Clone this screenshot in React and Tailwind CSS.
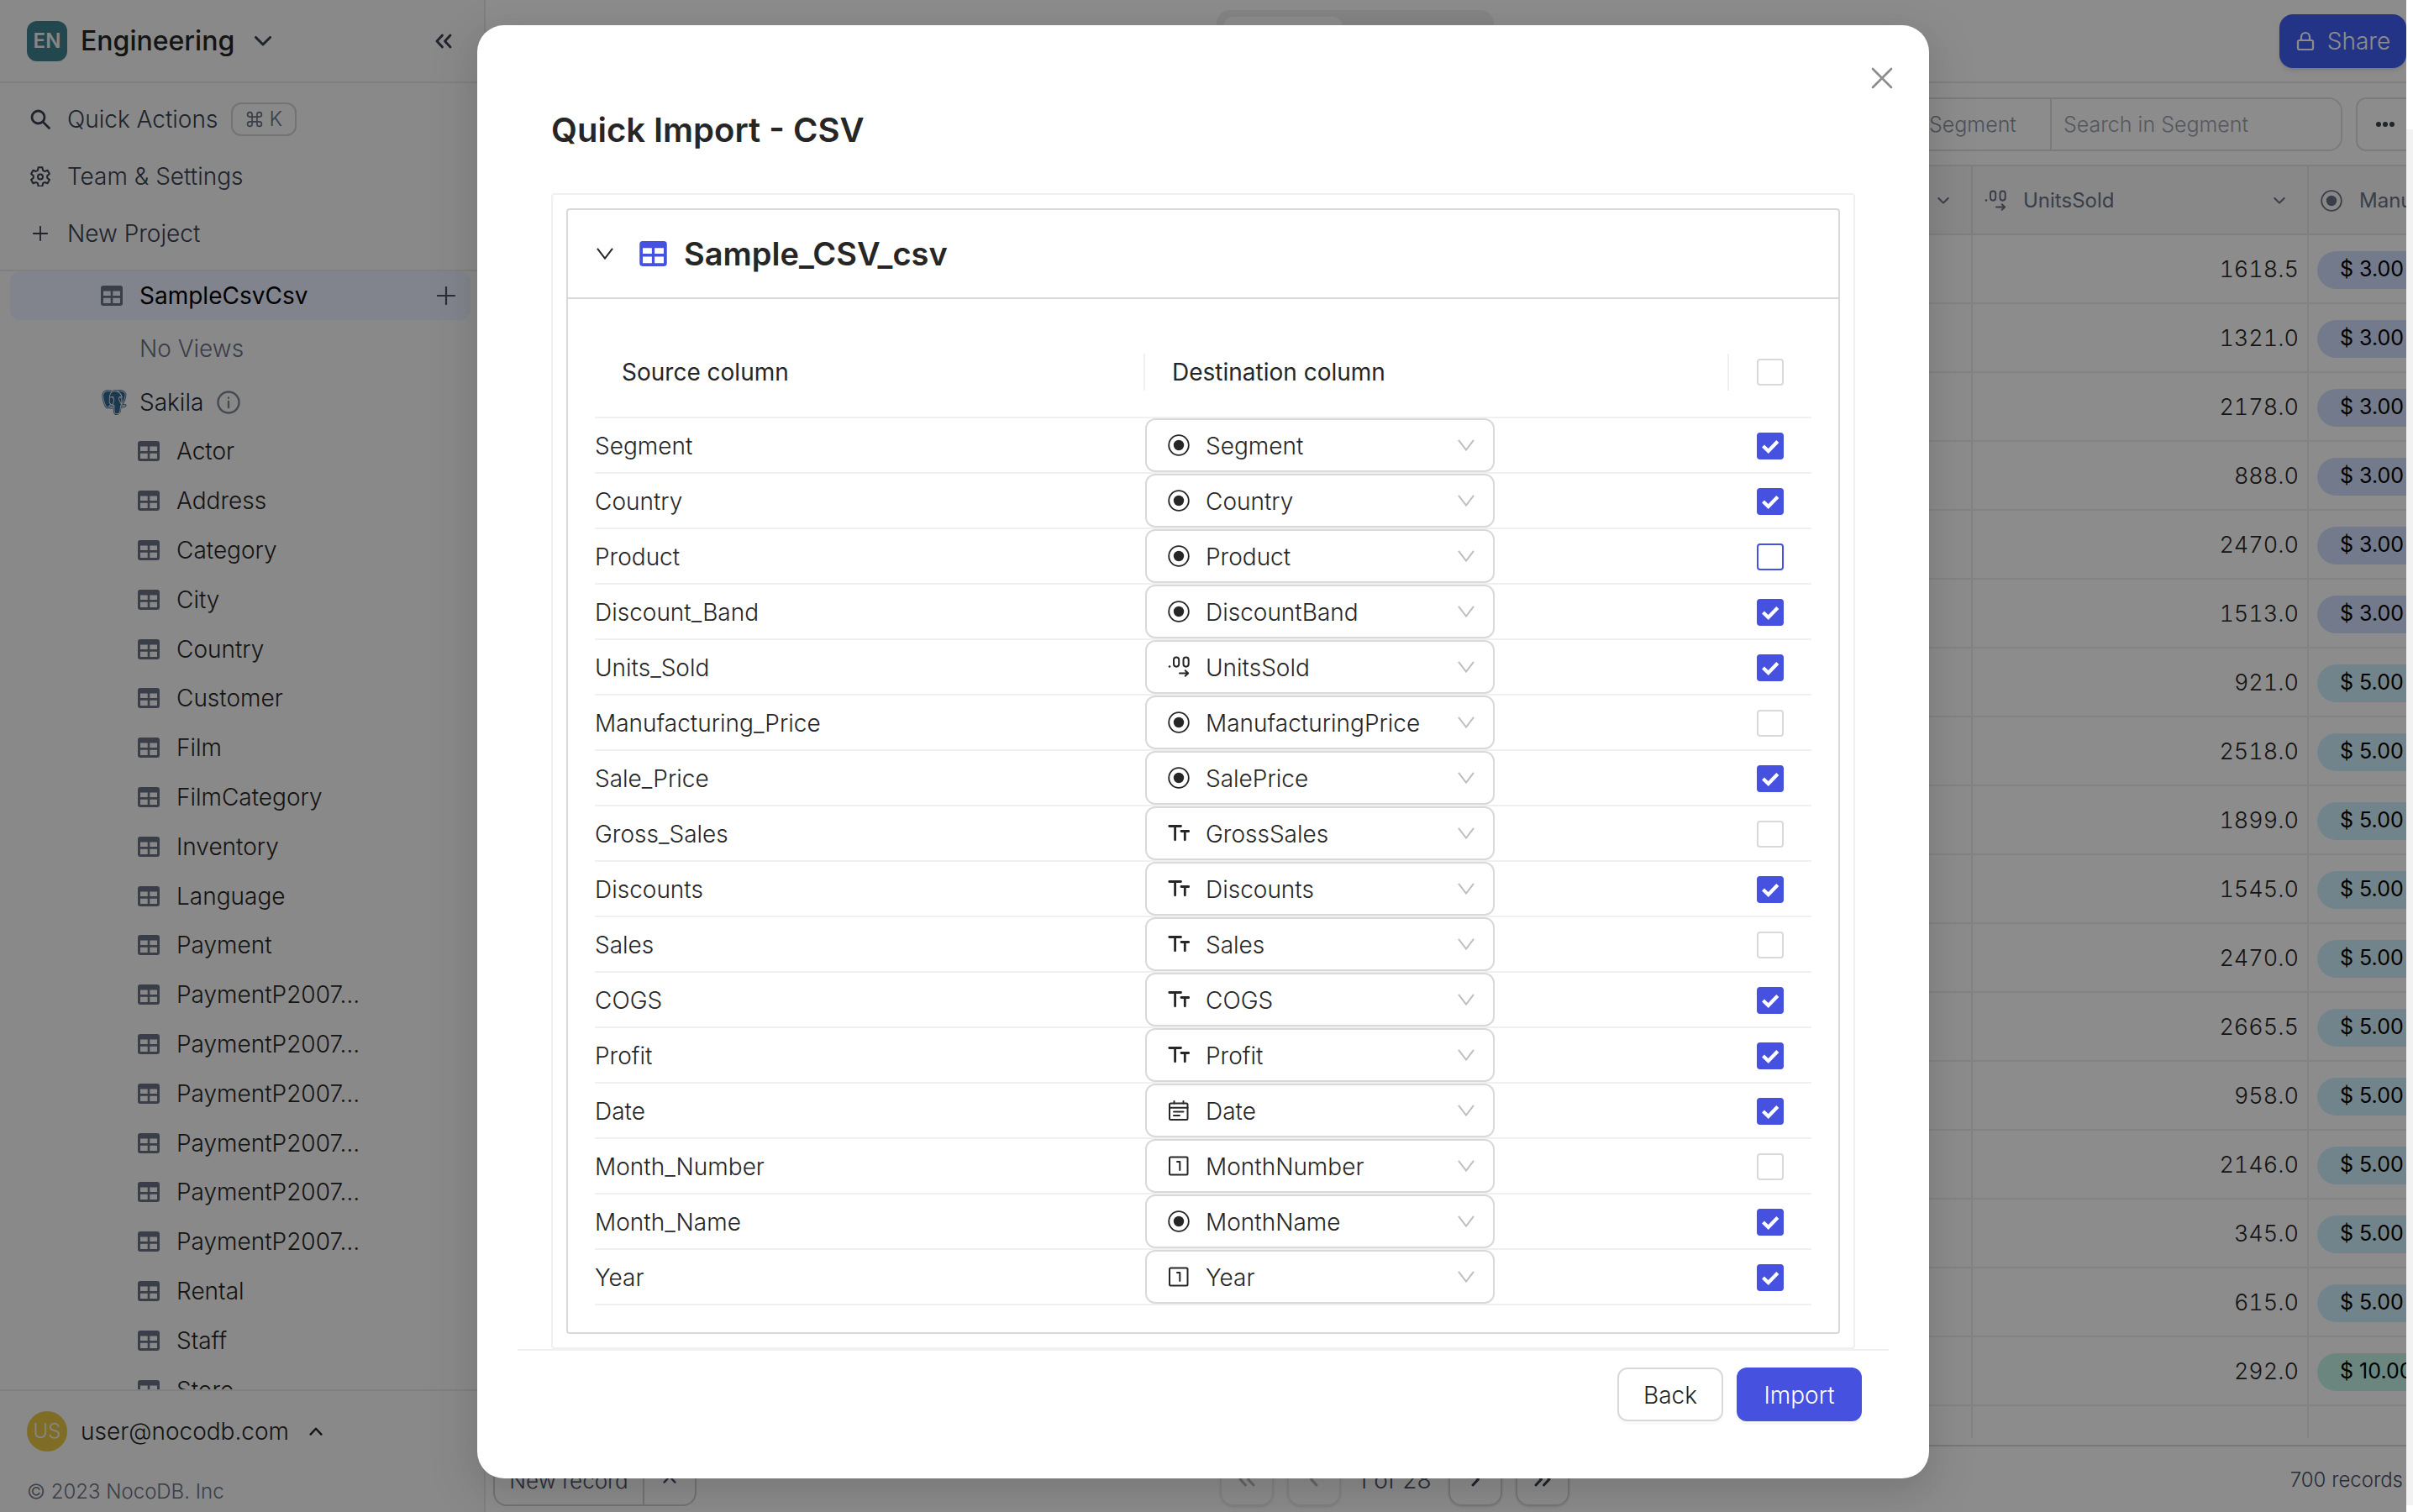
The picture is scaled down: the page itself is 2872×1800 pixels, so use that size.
import React from "react";
import { BiLogoPostgresql } from "react-icons/bi";
import { Lock } from "lucide-react";

const FIELDS = [
  ["Segment", "Segment", "select", "on"],
  ["Country", "Country", "select", "on"],
  ["Product", "Product", "select", "active"],
  ["Discount_Band", "DiscountBand", "select", "on"],
  ["Units_Sold", "UnitsSold", "decimal", "on"],
  ["Manufacturing_Price", "ManufacturingPrice", "select", "off"],
  ["Sale_Price", "SalePrice", "select", "on"],
  ["Gross_Sales", "GrossSales", "text", "off"],
  ["Discounts", "Discounts", "text", "on"],
  ["Sales", "Sales", "text", "off"],
  ["COGS", "COGS", "text", "on"],
  ["Profit", "Profit", "text", "on"],
  ["Date", "Date", "date", "on"],
  ["Month_Number", "MonthNumber", "number", "off"],
  ["Month_Name", "MonthName", "select", "on"],
  ["Year", "Year", "number", "on"],
];

const TABLES = [
  "Actor", "Address", "Category", "City", "Country", "Customer", "Film", "FilmCategory",
  "Inventory", "Language", "Payment", "PaymentP2007…", "PaymentP2007…", "PaymentP2007…",
  "PaymentP2007…", "PaymentP2007…", "PaymentP2007…", "Rental", "Staff", "Store",
];

const BLUE = "bg-[#cfdffe]";
const CYAN = "bg-[#d0f1fd]";
const GREEN = "bg-[#c2f5e8]";

const RECORDS = [
  ["1618.5", "$ 3.00", BLUE], ["1321.0", "$ 3.00", BLUE], ["2178.0", "$ 3.00", BLUE],
  ["888.0", "$ 3.00", BLUE], ["2470.0", "$ 3.00", BLUE], ["1513.0", "$ 3.00", BLUE],
  ["921.0", "$ 5.00", CYAN], ["2518.0", "$ 5.00", CYAN], ["1899.0", "$ 5.00", CYAN],
  ["1545.0", "$ 5.00", CYAN], ["2470.0", "$ 5.00", CYAN], ["2665.5", "$ 5.00", CYAN],
  ["958.0", "$ 5.00", CYAN], ["2146.0", "$ 5.00", CYAN], ["345.0", "$ 5.00", CYAN],
  ["615.0", "$ 5.00", CYAN], ["292.0", "$ 10.00", GREEN],
];

function Stroke({ box = "0 0 24 24", width = 2, className, cap = "round", children }) {
  return (
    <svg viewBox={box} fill="none" stroke="currentColor" strokeWidth={width} strokeLinecap={cap} strokeLinejoin={cap === "round" ? "round" : "miter"} className={className} aria-hidden="true">
      {children}
    </svg>
  );
}

const Chevron = ({ className, d = "M1.5 1.5 10 10l8.5-8.5", width = 3 }) => (
  <Stroke box="0 0 20 12" width={width} className={className}><path d={d} /></Stroke>
);

const ThinChevron = ({ className }) => (
  <Stroke box="0 0 20 14" width={2} cap="butt" className={className}><path d="M1 .8 10 12.6 19 .8" /></Stroke>
);

const TableIcon = ({ className }) => (
  <svg viewBox="0 0 26 24" fill="currentColor" fillRule="evenodd" className={className} aria-hidden="true">
    <path d="M3 0h20a3 3 0 0 1 3 3v18a3 3 0 0 1-3 3H3a3 3 0 0 1-3-3V3a3 3 0 0 1 3-3ZM3 6.500h8.700v5.500H3ZM14.300 6.500H23v5.500h-8.700ZM3 14.800h8.700V21H3ZM14.300 14.800H23V21h-8.700Z" />
  </svg>
);

function TypeIcon({ type, className }) {
  if (type === "decimal")
    return (
      <Stroke box="0 0 26 26" width={2} className={className}>
        <circle cx="2" cy="12.500" r="1.300" fill="currentColor" stroke="none" />
        <rect x="7" y="1.500" width="6.200" height="11.200" rx="3.100" />
        <rect x="18.500" y="1.500" width="6.200" height="11.200" rx="3.100" />
        <path d="M14 20.500h10M20.700 17.200l3.500 3.300-3.500 3.300" />
      </Stroke>
    );
  if (type === "text")
    return (
      <Stroke box="0 0 26 26" width={2.8} className={className}>
        <path d="M1.800 4.500H15.500M8.600 4.500V20.800M16 10.500H24.700M20.300 10.500V20.800" />
      </Stroke>
    );
  if (type === "date")
    return (
      <Stroke box="0 0 26 26" width={2} className={className}>
        <rect x="2" y="4.500" width="21.500" height="19.500" rx="1.500" />
        <path d="M2 9.800h21.500M7.500 2v2.500M18.500 2v2.500M7 14.500h11.500M7 19h7" />
      </Stroke>
    );
  if (type === "number")
    return (
      <Stroke box="0 0 26 26" width={2} className={className}>
        <rect x="2" y="2.500" width="21.500" height="21" rx="1.500" />
        <path d="M11 8h3.300V18" />
      </Stroke>
    );
  return (
    <Stroke box="0 0 26 26" width={1.8} className={className}>
      <circle cx="13" cy="13" r="11.800" />
      <circle cx="13" cy="13" r="6.200" fill="currentColor" stroke="none" />
    </Stroke>
  );
}

const PlusIcon = ({ className }) => (
  <Stroke width={2.4} className={className}><path d="M12 1v22M1 12h22" /></Stroke>
);

function Check({ state, label }) {
  return (
    <span className="mx-auto grid size-8 *:col-start-1 *:row-start-1">
      <input
        type="checkbox"
        aria-label={label}
        defaultChecked={state === "on"}
        className={
          "peer size-8 appearance-none rounded-sm border-2 bg-white checked:border-[#4651df] checked:bg-[#4651df] " +
          (state === "active" ? "border-[#4651df]" : "border-[#d9d9d9]")
        }
      />
      <svg viewBox="0 0 32 32" fill="none" stroke="#fff" strokeWidth="4.200" className="pointer-events-none hidden size-8 peer-checked:block" aria-hidden="true">
        <path d="M7.500 16 13.700 22 24.800 10.500" />
      </svg>
    </span>
  );
}

function Sidebar() {
  return (
    <aside className="flex w-[578px] shrink-0 flex-col border-r-2 border-[#e7e7e9] bg-[#f9f9fa]">
      <header className="flex h-[99px] shrink-0 items-center border-b-2 border-[#e7e7e9] pr-[38px] pl-8">
        <button className="flex items-center gap-4">
          <span className="flex size-12 items-center justify-center rounded-xl bg-[#3f828f] text-[24px] font-semibold text-[#f5f5f5]">EN</span>
          <span className="text-[32px] font-medium text-[#262626]">Engineering</span>
          <Chevron className="ml-2 h-3 w-5 text-[#374151]" />
        </button>
        <button aria-label="Collapse sidebar" className="ml-auto">
          <Stroke box="0 0 20 18" width={2.8} className="h-[18px] w-5 text-[#374151]">
            <path d="M8.500 2 2 9l6.500 7M18 2l-6.500 7 6.500 7" />
          </Stroke>
        </button>
      </header>
      <nav className="flex shrink-0 flex-col border-b-2 border-[#e7e7e9] px-9 py-[9px] text-[28px] font-light text-[#374151]">
        <button className="flex h-[68px] items-center">
          <Stroke box="0 0 24 24" width={2.8} className="size-6"><circle cx="9.500" cy="9.500" r="7.500" /><path d="m15.500 15.500 7 7" /></Stroke>
          <span className="ml-5">Quick Actions</span>
          <kbd className="ml-4 flex h-10 w-[78px] items-center justify-center rounded-xl border-2 border-[#d1d1d6] font-[Inter] text-[24px] text-[#6a7184]">
            <Stroke width={2} className="mr-2 size-5">
              <path d="M8.500 8.500h7v7h-7zM8.500 8.500V5.200a3.300 3.300 0 1 0-3.300 3.300zM15.500 8.500h3.300a3.300 3.300 0 1 0-3.300-3.300zM15.500 15.500v3.300a3.300 3.300 0 1 0 3.300-3.300zM8.500 15.500H5.200a3.300 3.300 0 1 0 3.300 3.300z" />
            </Stroke>
            K
          </kbd>
        </button>
        <button className="flex h-[68px] items-center">
          <Stroke width={2} className="size-6">
            <path d="M9.600 1.200h4.800l.7 3.600 2 1.200 3.500-1.200 2.300 4.100-2.700 2.400v2.400l2.700 2.400-2.300 4.100-3.500-1.200-2 1.200-.7 3.600H9.600l-.7-3.600-2-1.200-3.500 1.200-2.300-4.100 2.700-2.400v-2.400L1.100 8.900l2.300-4.100L6.900 6l2-1.200z" />
            <circle cx="12" cy="12.500" r="3" />
          </Stroke>
          <span className="ml-5">Team &amp; Settings</span>
        </button>
        <button className="flex h-[68px] items-center">
          <span className="flex w-6 justify-center"><PlusIcon className="size-[18px]" /></span>
          <span className="ml-5">New Project</span>
        </button>
      </nav>
      <div className="flex min-h-0 flex-1 flex-col overflow-hidden text-[28px]">
        <div className="mr-4 ml-3 flex h-[58px] shrink-0 items-center rounded-xl bg-[#ebf0ff] pr-[18px] pl-[108px]">
          <TableIcon className="h-6 w-[26px] text-[#6a7184]" />
          <a href="#SampleCsvCsv" className="ml-5 text-black">SampleCsvCsv</a>
          <button aria-label="Add view" className="ml-auto text-[#4a5268]"><PlusIcon className="size-[22px]" /></button>
        </div>
        <p className="flex h-[68px] shrink-0 items-center pl-[166px] font-light text-[#6a7184]">No Views</p>
        <div className="flex h-[59px] shrink-0 items-center pl-[118px] font-light text-[#1f293a]">
          <BiLogoPostgresql className="size-9 text-[#336791]" />
          <span className="ml-3">Sakila</span>
          <Stroke box="0 0 28 28" width={2.4} className="ml-4 size-7 text-[#808797]">
            <circle cx="14" cy="14" r="12.500" /><path d="M14 13v7M14 8.500v.2" />
          </Stroke>
        </div>
        <ul className="grid h-[1176px] shrink-0 auto-rows-fr">
          {TABLES.map((name, i) => (
            <li key={i} className="flex items-center">
              <a href={"#table-" + i} className="flex items-center gap-5 pl-[164px] font-light text-[#262626]">
                <TableIcon className="h-6 w-[26px] text-[#6a7184]" />
                {name}
              </a>
            </li>
          ))}
        </ul>
      </div>
      <footer className="shrink-0 border-t-2 border-[#e7e7e9] px-8 pt-6 pb-1">
        <button className="flex items-center gap-4 text-[28px] text-[#262626]">
          <span className="flex size-12 items-center justify-center rounded-full bg-[#e8c645] text-[24px] font-light text-[#f5f5f5]">US</span>
          <span className="font-light">user@nocodb.com</span>
          <Chevron d="M2 10.500 10 2l8 8.500" className="ml-2 h-2.5 w-4" />
        </button>
        <p className="mt-7 flex h-10 items-center text-[24px] font-light text-[#6a7184]">© 2023 NocoDB. Inc</p>
      </footer>
    </aside>
  );
}

function PageButton({ label, d, disabled }) {
  return (
    <button aria-label={label} disabled={disabled} className={"flex size-16 items-center justify-center rounded-2xl border-2 shadow-sm " + (disabled ? "border-[#ebebed] text-[#b5b8c0]" : "border-[#d9d9dc] text-[#374151]")}>
      <Stroke box="0 0 20 18" width={3} className="h-[18px] w-5"><path d={d} /></Stroke>
    </button>
  );
}

function DataView() {
  return (
    <main className="flex min-w-0 flex-1 flex-col overflow-hidden bg-white">
      <header className="flex h-[99px] shrink-0 items-start justify-end border-b-2 border-[#e7e7e9]">
        <div className="mt-3 mr-[935px] flex h-[74px] w-[330px] rounded-2xl bg-[#f0f0f2] p-2">
          <span className="w-[142px] rounded-xl bg-white" />
        </div>
        <button className="mt-[17px] flex h-16 w-[151px] items-center justify-center gap-3.5 rounded-2xl bg-[#4060f4] text-[28px] text-white shadow-md">
          <Lock className="h-[26px] w-6" strokeWidth={2.2} />
          <span className="font-light">Share</span>
        </button>
      </header>
      <div className="flex h-[97px] shrink-0 items-center justify-end gap-4">
        <div className="flex h-16 rounded-2xl border-2 border-[#e1e1e4] text-[25px] font-light">
          <span className="flex w-[196px] items-center border-r-2 border-[#e1e1e4] pt-0.5 pl-[50px] text-[#8d93a3]">Segment</span>
          <input aria-label="Search in Segment" placeholder="Search in Segment" className="w-[344px] px-3.5 pt-0.5 placeholder:text-[#9aa0ae]" />
        </div>
        <button aria-label="More" className="-mr-3 flex h-16 w-[72px] items-center gap-0.5 rounded-xl border-2 border-[#e1e1e4] pl-[22px]">
          <i className="size-1.5 rounded-full bg-[#374151]" /><i className="size-1.5 rounded-full bg-[#374151]" /><i className="size-1.5 rounded-full bg-[#374151]" />
        </button>
      </div>
      <div className="flex-1 border-t-2 border-[#e7e7e9]">
        <table className="w-full table-fixed border-separate border-spacing-0">
          <thead>
            <tr className="h-[82px] bg-[#f7f7f8] text-left text-[24px] text-[#6a7184] *:border-b-2 *:border-[#e7e7e9] *:p-0 *:pt-0.5 *:font-normal">
              <th className="border-r-2"><Chevron className="mr-[26px] ml-auto h-2 w-3.5" /></th>
              <th className="w-[400px] border-r-2">
                <div className="flex items-center pr-[26px] pl-3.5">
                  <TypeIcon type="decimal" className="size-[26px]" />
                  <span className="ml-5">UnitsSold</span>
                  <Chevron className="ml-auto h-2 w-3.5" />
                </div>
              </th>
              <th className="w-[116px]">
                <div className="flex items-center gap-5 overflow-hidden pl-3.5">
                  <TypeIcon type="select" className="size-[26px] shrink-0" />
                  Manu
                </div>
              </th>
            </tr>
          </thead>
          <tbody className="text-[27px] font-light">
            {RECORDS.map(([units, price, color], i) => (
              <tr key={i} className="h-[82px] *:border-b-2 *:border-[#efeff1] *:p-0 *:pt-0.5">
                <td className="border-r-2" />
                <td className="border-r-2 pr-2.5! text-right text-[#262626] tabular-nums">{units}</td>
                <td>
                  <div className="overflow-hidden pl-2.5">
                    <span className={"flex h-[45px] w-[130px] items-center rounded-full pl-[27px] text-[25px] font-normal whitespace-nowrap text-black " + color}>{price}</span>
                  </div>
                </td>
              </tr>
            ))}
            <tr className="h-[38px] *:border-[#efeff1]">
              <td className="border-r-2" /><td className="border-r-2" /><td />
            </tr>
          </tbody>
        </table>
      </div>
      <footer className="flex h-20 shrink-0 items-center border-t-2 border-[#d9d9dc] pr-1 pl-[9px] text-[26px] font-light text-[#4a5268]">
        <div className="flex h-16 w-[242px] rounded-2xl border-2 border-[#d1d1d6]">
          <button className="flex-1 border-r-2 border-[#d1d1d6] pt-0.5 whitespace-nowrap">New record</button>
          <button aria-label="Record options" className="flex w-[60px] items-center justify-center"><Chevron d="M2 10.500 10 2l8 8.500" className="h-2.5 w-4" /></button>
        </div>
        <div className="ml-[623px] flex items-center gap-4">
          <PageButton disabled label="First page" d="M8.500 2 2 9l6.500 7M18 2l-6.500 7 6.500 7" />
          <PageButton disabled label="Previous page" d="M13 2 6.500 9l6.500 7" />
          <span className="w-24 pt-0.5 text-center text-[28px]">1 of 28</span>
          <PageButton label="Next page" d="M7 2l6.500 7L7 16" />
          <PageButton label="Last page" d="M2 2l6.500 7L2 16M11.500 2l6.500 7-6.500 7" />
        </div>
        <span className="ml-auto pt-0.5 text-[24px]">700 records</span>
      </footer>
    </main>
  );
}

function ImportDialog() {
  return (
    <section role="dialog" aria-modal="true" aria-labelledby="dialog-title" className="relative w-[1728px] max-w-full rounded-4xl bg-white pt-[97px] pb-[68px] text-[#262626] shadow-[0_12px_32px_rgba(0,0,0,0.08),0_18px_56px_16px_rgba(0,0,0,0.06)]">
      <button aria-label="Close" className="absolute top-[50px] right-[43px] text-[#8c8c8c]">
        <Stroke box="0 0 26 26" width={2.6} className="size-[26px]"><path d="M2 2l22 22M24 2 2 24" /></Stroke>
      </button>
      <h2 id="dialog-title" className="mx-[88px] text-[40px] leading-[56px] font-semibold">Quick Import - CSV</h2>
      <div className="mx-[88px] mt-[47px] rounded-sm border-2 border-[#f0f0f0] p-4">
        <div className="rounded-sm border-2 border-[#d9d9d9]">
          <h3 className="flex h-[106px] items-center border-b-2 border-[#d9d9d9] pl-[34px] text-[38px] font-semibold">
            <button aria-label="Collapse table"><ThinChevron className="h-3.5 w-5" /></button>
            <TableIcon className="ml-[31px] h-[30px] w-[33px] text-[#4651df]" />
            <span className="ml-5">Sample_CSV_csv</span>
          </h3>
          <div className="p-8">
            <table className="w-full table-fixed border-separate border-spacing-0 text-[28px]">
              <thead>
                <tr className="h-[110px] text-left *:border-b-2 *:border-[#f0f0f0] *:p-0 *:pt-0.5 *:font-normal">
                  <th className="w-[655px]"><div className="flex h-11 items-center border-r-2 border-[#f0f0f0] pl-8">Source column</div></th>
                  <th><div className="flex h-11 items-center border-r-2 border-[#f0f0f0] pl-8">Destination column</div></th>
                  <th className="w-[98px]"><Check state="off" label="Select all columns" /></th>
                </tr>
              </thead>
              <tbody className="font-light">
                {FIELDS.map(([source, target, type, state]) => (
                  <tr key={source} className="*:border-b-2 *:border-[#f0f0f0] *:p-0">
                    <td className="pt-0.5!">{source}</td>
                    <td>
                      <div className="relative h-16 w-[416px]">
                        <select aria-label={"Destination for " + source} className="block h-16 w-full appearance-none rounded-xl border-2 border-[#d9d9d9] bg-white pt-0.5 pr-12 pl-[70px]">
                          <option>{target}</option>
                        </select>
                        <TypeIcon type={type} className="pointer-events-none absolute top-[19px] left-[27px] size-[26px]" />
                        <ThinChevron className="pointer-events-none absolute top-[25px] right-6 h-3.5 w-5 text-[#bfbfbf]" />
                      </div>
                    </td>
                    <td className="pt-0.5!"><Check state={state} label={"Import " + source} /></td>
                  </tr>
                ))}
              </tbody>
            </table>
          </div>
        </div>
      </div>
      <div className="mx-12 flex justify-end gap-4 border-t-2 border-[#f0f0f0] px-8 pt-5 text-[28px] font-light">
        <button className="h-16 w-[126px] rounded-xl border-2 border-[#d9d9d9] pt-0.5 shadow-[0_4px_0_rgba(0,0,0,0.02)]">Back</button>
        <button className="h-16 w-[149px] rounded-xl bg-[#4651df] pt-0.5 text-white shadow-[0_4px_0_rgba(0,0,0,0.03)]">Import</button>
      </div>
    </section>
  );
}

export default function App() {
  return (
    <div className="flex h-screen bg-white font-[Inter,sans-serif]">
      <div className="relative flex min-w-0 flex-1">
        <Sidebar />
        <DataView />
        <div className="absolute inset-0 flex items-start justify-center bg-black/45 pt-[30px]">
          <ImportDialog />
        </div>
      </div>
      <div className="w-2 shrink-0 pt-[154px] pb-2"><div className="h-full bg-[#f2f2f2]" /></div>
    </div>
  );
}
